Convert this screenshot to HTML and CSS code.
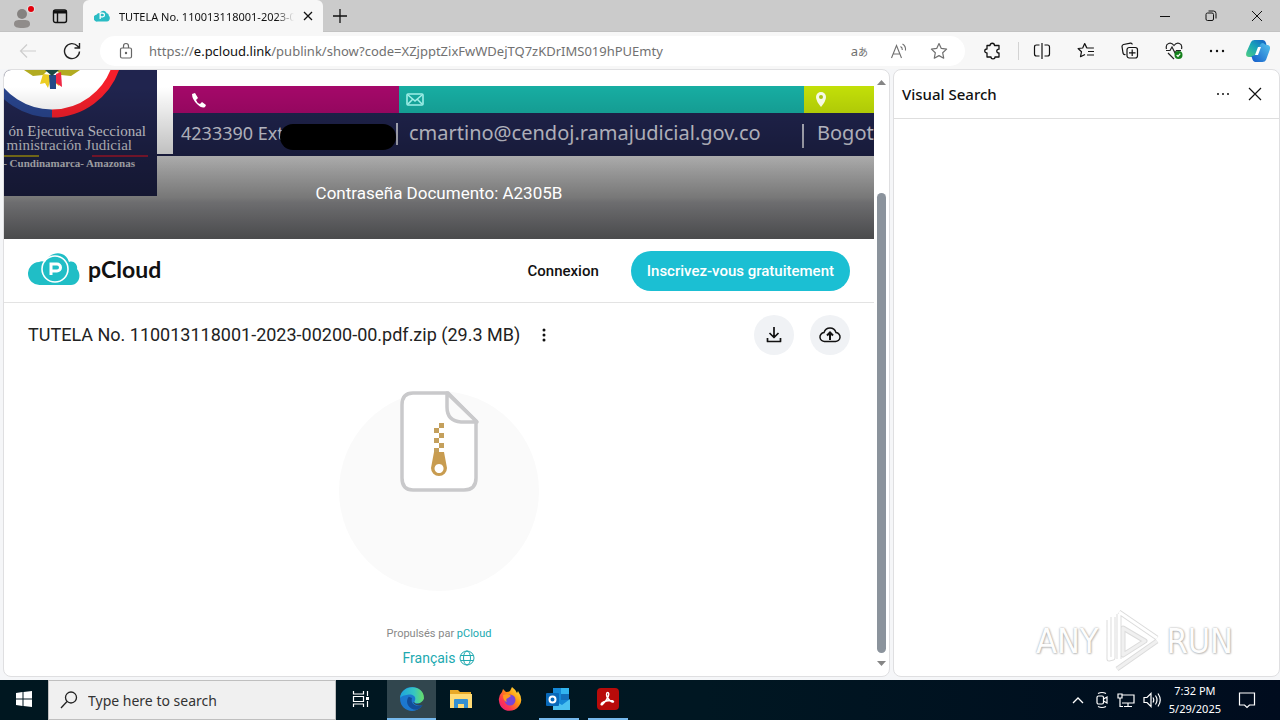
FILE: index.html
```html
<!DOCTYPE html>
<html lang="fr">
<head>
<meta charset="utf-8">
<title>TUTELA No. 110013118001-2023-00200-00.pdf.zip</title>
<link rel="stylesheet" href="styles.css">
</head>
<body>
<header class="tabstrip">
  <div class="strip-tools">
    <button class="icon-btn profile" aria-label="Profile"><svg width="26" height="26" viewBox="0 0 26 26"><circle cx="12" cy="11" r="5" fill="#858280"/><path d="M4 21c0-4 3-4 8-4s8 0 8 4c0 3-3 4-8 4s-8-1-8-4z" fill="#908c8a"/><circle cx="21" cy="6" r="4" fill="#e2dede"/><circle cx="21" cy="6" r="3" fill="#e3000b"/></svg></button>
    <button class="icon-btn" aria-label="Tab actions"><svg width="16" height="16" viewBox="0 0 16 16" fill="none" stroke="#111" stroke-width="1.4"><rect x="1.5" y="2" width="13" height="12.5" rx="2"/><path d="M1.5 4h13" stroke-width="3"/><path d="M5.5 4v10"/></svg></button>
  </div>
  <div class="tab">
    <svg width="16" height="12" viewBox="0 0 52 36"><path d="M12 36A11 11 0 0 1 8 14C11 8 17 9 19 8 27-3 38 0 41 9c5 0 7 4 7 7 7 6 3 20-6 20z" fill="#2abcc4"/><path d="M20 28V9h8a6 6 0 0 1 0 12h-7" fill="none" stroke="#fff" stroke-width="4"/></svg>
    <span class="tab-title">TUTELA No. 110013118001-2023-0</span>
    <button class="icon-btn" aria-label="Close tab"><svg width="10" height="10" viewBox="0 0 10 10" stroke="#111" stroke-width="1.3"><path d="M1 1l8 8M9 1l-8 8"/></svg></button>
  </div>
  <button class="icon-btn new-tab" aria-label="New tab"><svg width="14" height="14" viewBox="0 0 14 14" stroke="#111" stroke-width="1.3"><path d="M7 0v14M0 7h14"/></svg></button>
  <div class="window-controls">
    <button class="icon-btn" aria-label="Minimize"><svg width="12" height="12" viewBox="0 0 12 12" stroke="#111"><path d="M1 6.5h10"/></svg></button>
    <button class="icon-btn" aria-label="Restore"><svg width="12" height="12" viewBox="0 0 12 12" fill="none" stroke="#111"><rect x="1" y="3" width="7.500" height="7.500" rx="1.500"/><path d="M3.500 1h5a2.500 2.500 0 0 1 2.500 2.500v5"/></svg></button>
    <button class="icon-btn" aria-label="Close"><svg width="12" height="12" viewBox="0 0 12 12" stroke="#111"><path d="M1 1l10 10M11 1L1 11"/></svg></button>
  </div>
</header>

<nav class="toolbar">
  <button class="icon-btn" aria-label="Back"><svg width="18" height="16" viewBox="0 0 18 16" fill="none" stroke="#cdcdcd" stroke-width="1.2"><path d="M17 8H1.500M8 1.500L1.500 8 8 14.500"/></svg></button>
  <button class="icon-btn reload" aria-label="Refresh"><svg width="18" height="18" viewBox="0 0 18 18" fill="none" stroke="#222" stroke-width="1.4"><path d="M16.500 9.500A7.500 7.500 0 1 1 14.500 4l2 2M16.500 1v5h-5"/></svg></button>
  <div class="address">
    <svg width="14" height="18" viewBox="0 0 14 18" fill="none" stroke="#666" stroke-width="1.2"><rect x="1.500" y="6" width="11" height="10" rx="1.500"/><path d="M4.500 6V4a2.500 2.500 0 0 1 5 0v2"/><circle cx="7" cy="11" r=".6" fill="#666"/></svg>
    <div class="url" aria-label="Address">https://<b>e.pcloud.link</b>/publink/show?code=XZjpptZixFwWDejTQ7zKDrIMS019hPUEmty</div>
    <button class="icon-btn translate" aria-label="Translate"><span>a<small>あ</small></span></button>
    <button class="icon-btn" aria-label="Read aloud"><svg width="18" height="16" viewBox="0 0 18 16" fill="none" stroke="#707070" stroke-width="1.1"><path d="M1.500 15L6.500 2.500 11.500 15M3 11h7M10.500 3.500q2 1 1.800 3.500M12.500 1q3.500 2 3 6.500"/></svg></button>
    <button class="icon-btn" aria-label="Favorite"><svg width="18" height="18" viewBox="0 0 18 18" fill="none" stroke="#707070" stroke-width="1.2" stroke-linejoin="round"><path d="M9 1.500l2.300 4.900 5.300.7-3.900 3.700 1 5.400L9 13.600l-4.700 2.600 1-5.400L1.400 7.100l5.300-.7z"/></svg></button>
  </div>
  <div class="tools">
    <button class="icon-btn" aria-label="Extensions"><svg width="18" height="18" viewBox="0 0 18 18" fill="none" stroke="#111" stroke-width="1.300" stroke-linejoin="round"><path d="M3 3.500h3c0-3 4.500-3 4.500 0H15v3.700c-3-.3-3 4 0 3.800v4h-4c0 2.500-4 2.500-4 0H3v-4c-3 0-3-4 0-4z"/></svg></button>
    <button class="icon-btn split" aria-label="Split screen"><svg width="18" height="18" viewBox="0 0 18 18" fill="none" stroke="#111" stroke-width="1.200"><path d="M6.500 3h-3Q1.500 3 1.500 5v7q0 2 2 2h3M11.500 3h3q2 0 2 2v7q0 2-2 2h-3M9 1v16"/></svg></button>
    <button class="icon-btn" aria-label="Favorites"><svg width="18" height="18" viewBox="0 0 18 18" fill="none" stroke="#111" stroke-width="1.200" stroke-linejoin="round"><path d="M9.500 5.500L7.700 1.500 5.700 6l-4.600.5 3.400 3.200-1 5L8 12.500M7.700 1.500l2.200 4.500h7M11 9.500h6M10 13h7"/></svg></button>
    <button class="icon-btn" aria-label="Collections"><svg width="18" height="18" viewBox="0 0 18 18" fill="none" stroke="#111" stroke-width="1.200"><path d="M4.500 12.500Q2.500 13 2 11L1 4.500Q1 3 2.500 2.500l7-1.300Q11 1 11.300 2.500"/><rect x="6" y="5.500" width="10.500" height="10.500" rx="2.200"/><path d="M11.200 7.500v6.500M8 10.800h6.500"/></svg></button>
    <button class="icon-btn" aria-label="Browser essentials"><svg width="18" height="18" viewBox="0 0 18 18" fill="none" stroke="#222" stroke-width="1.200"><path d="M1.500 7C0 1 6-.5 9 3.500 12-.5 18 1 16.500 7M1 8.500h4L7 5l3 6 1.500-2.500H16M3 11l6 6"/><circle cx="13.500" cy="13" r="4" fill="#14801b" stroke="none"/><path d="M11.700 13l1.300 1.300 2.300-2.600" stroke="#fff"/></svg></button>
    <button class="icon-btn" aria-label="Settings"><svg width="16" height="4" viewBox="0 0 16 4" fill="#111"><circle cx="2" cy="2" r="1.200"/><circle cx="8" cy="2" r="1.200"/><circle cx="14" cy="2" r="1.200"/></svg></button>
    <button class="icon-btn copilot" aria-label="Copilot"><svg width="24" height="24" viewBox="0 0 24 24"><defs><linearGradient id="cl" x1="0" y1="1" x2="1" y2="0"><stop stop-color="#4fcf82"/><stop offset=".5" stop-color="#19a4b8"/><stop offset="1" stop-color="#165bcb"/></linearGradient><linearGradient id="cr" x1="1" y1="0" x2="0" y2="1"><stop stop-color="#55c5ed"/><stop offset="1" stop-color="#135ac9"/></linearGradient></defs><path d="M5 3q1-2 3.500-2h8Q19 1 20 4l1 4-5-1q-2 0-3 3l-2 6q-1 2-4 2H3q-4 0-2.500-5z" fill="url(#cl)"/><path d="M20 21q-1 2-3.500 2h-7Q7 23 6 19l-.5-2q3 0 4.500-2l4-9q1-2 3-2l3 2h2q3 1 1.700 5z" fill="url(#cr)"/><path d="M12 8h3l-3 8H9z" fill="#fff"/></svg></button>
  </div>
</nav>

<main class="workspace">
  <section class="viewport">
    <div class="page">
      <div class="banner">
        <svg class="banner-art" viewBox="0 0 870 169" preserveAspectRatio="xMinYMin slice" aria-hidden="true">
          <defs>
            <linearGradient id="shade" x1="0" y1="0" x2="0" y2="1"><stop offset=".1" stop-color="#000" stop-opacity="0"/><stop offset=".5" stop-color="#000" stop-opacity=".25"/><stop offset="1" stop-color="#000" stop-opacity=".48"/></linearGradient>
            <linearGradient id="paper" x1="0" y1="0" x2="0" y2="1"><stop stop-color="#e6e6e6"/><stop offset=".5" stop-color="#bdbdbd"/><stop offset=".56" stop-color="#b0b0b4"/><stop offset="1" stop-color="#8f9093"/></linearGradient>
          </defs>
          <path fill="#fff" d="M0 0h870v86H0z"/><path fill="url(#paper)" d="M0 86h870v83H0z"/>
          <path fill="#20244e" d="M0 0h153v126H0z"/><path fill="#20244e" d="M153 84h16v2h-16zM169 43h701v43H169z"/>
          <path fill="#a40869" d="M169 16h226v27H169z"/><path fill="#17ada2" d="M395 16h405v27H395z"/><path fill="#c2df08" d="M800 16h70v27h-70z"/>
          <circle cx="48" cy="-24" r="67" fill="#fff"/><path d="M48 43.500a67.500 67.500 0 0 1-62-40" fill="none" stroke="#29458e" stroke-width="8"/><path d="M48 43.500a67.500 67.500 0 0 0 64-47" fill="none" stroke="#f51f2b" stroke-width="8"/>
          <path d="M20 0l9 6 10-1 5-5M76 0l-9 6-10-1-5-5" fill="#b2ab21"/><path d="M39 4l-3 10 5-1 3 5 4-13M57 3l-2 13-4-3" fill="#eccd22"/><path d="M45 5h7v14h-6z" fill="#244986"/><path d="M52 4l5-2 1 15-6-4" fill="#ef2945"/><path d="M41 0h14l-7 6z" fill="#1b4942"/>
          <g class="art-serif"><text x="142" y="66" text-anchor="end" font-size="15">ón Ejecutiva Seccional</text><text x="128" y="80" text-anchor="end" font-size="15">ministración Judicial</text><text x="131" y="97" text-anchor="end" font-size="11" font-weight="bold">- Cundinamarca- Amazonas</text></g>
          <path d="M0 86h35" stroke="#bda810" stroke-width="1.500"/><path d="M88 86h56" stroke="#bc1830" stroke-width="1.500"/>
          <g class="art-sans"><text x="177" y="70" font-size="18">4233390 Ext</text><text x="405" y="70" font-size="20">cmartino@cendoj.ramajudicial.gov.co</text><text x="813" y="70" font-size="20">Bogot</text></g>
          <path d="M393 53v22M799 54v24" stroke="#b8b9c7" stroke-width="2"/><rect x="276" y="54" width="116" height="26" rx="13" fill="#000"/>
          <path fill="url(#shade)" d="M0 0h870v169H0z"/>
          <path d="M188 24l3-1 3 5-2 2q1 3 4 4l2-2 4 3-1 2q-3 2-8-3t-5-10z" fill="#fff"/>
          <g fill="none" stroke="#9feee7" stroke-width="1.600"><rect x="403" y="24" width="16" height="11" rx="1"/><path d="M404 25l7 6 7-6M404 34l5-5M418 34l-5-5"/></g>
          <path d="M817 37q-5-6-5-10a5 5 0 0 1 10 0q0 4-5 10z" fill="#f6f9e5"/><circle cx="817" cy="27" r="2" fill="#a9c414"/>
        </svg>
        <p class="caption">Contraseña Documento: A2305B</p>
      </div>
      <div class="site-head">
        <a class="brand" href="#"><svg width="52" height="34" viewBox="0 0 52 34"><path d="M12 33A10.500 10.500 0 0 1 11 10c2-1 4-1 6 0C21 0 37-3 41 10c5-2 9 3 8 7 5 6 2 16-6 16z" fill="#20bec6"/><circle cx="27" cy="17" r="13" fill="none" stroke="#fff" stroke-width="1.600"/><path d="M23 23v-11h6a3.200 3.200 0 0 1 0 7h-5" fill="none" stroke="#fff" stroke-width="3"/></svg><span>pCloud</span></a>
        <a class="login" href="#">Connexion</a>
        <button class="signup">Inscrivez-vous gratuitement</button>
      </div>
      <div class="file-bar">
        <h1>TUTELA No. 110013118001-2023-00200-00.pdf.zip (29.3 MB)</h1>
        <button class="icon-btn" aria-label="More"><svg width="6" height="14" viewBox="0 0 6 14" fill="#111"><circle cx="3" cy="2" r="1.500"/><circle cx="3" cy="7" r="1.500"/><circle cx="3" cy="12" r="1.500"/></svg></button>
        <button class="round first" aria-label="Download"><svg width="16" height="18" viewBox="0 0 16 18" fill="none" stroke="#111" stroke-width="1.700"><path d="M8 1v10M3.500 7L8 11.500 12.500 7M1.500 12v3.500h13V12" stroke-linejoin="round"/></svg></button>
        <button class="round" aria-label="Save to pCloud"><svg width="22" height="16" viewBox="0 0 22 16" fill="none" stroke="#111" stroke-width="1.500"><path d="M6 14.500a4.500 4.500 0 0 1-1-9C7-.5 15-.5 17 5.500a4.500 4.500 0 0 1-1 9z"/><path d="M11 13V6M8 8.500L11 5.500l3 3" stroke-width="2"/></svg></button>
      </div>
      <div class="preview"><svg width="80" height="101" viewBox="0 0 80 101"><path d="M14 2h35l28 28v57q0 12-12 12H14Q3 99 3 87V14Q3 2 14 2z" fill="#fff" stroke="#c9c9cb" stroke-width="3.500"/><path d="M48 2v14q0 14 14 15h16z" fill="#fafafa" stroke="#c9c9cb" stroke-width="3.500" stroke-linejoin="round"/><path d="M40 32h5v5h-5zM35 37h5v5h-5zM40 42h5v5h-5zM35 47h5v5h-5zM40 52h5v5h-5zM35 57h5v5h-5z" fill="#c4a05c"/><path fill-rule="evenodd" d="M35 61h10l3 16a8 8 0 1 1-16 0zM40 73a4.500 4.500 0 1 0 .1 0z" fill="#c89c50"/></svg></div>
      <footer class="site-foot"><p>Propulsés par <a href="#">pCloud</a></p><button class="lang">Français <svg width="16" height="16" viewBox="0 0 16 16" fill="none" stroke="#20a9b0"><circle cx="8" cy="8" r="7"/><ellipse cx="8" cy="8" rx="3.500" ry="7"/><path d="M1.500 5.500h13M1.500 10.500h13"/></svg></button></footer>
    </div>
    <div class="scrollbar" aria-hidden="true"><svg width="9" height="5" viewBox="0 0 9 5"><path d="M0 5l4.500-5L9 5z" fill="#858585"/></svg><div class="track"><div class="thumb"></div></div><svg width="9" height="5" viewBox="0 0 9 5"><path d="M0 0l4.500 5L9 0z" fill="#858585"/></svg></div>
  </section>
  <aside class="side">
    <div class="side-head"><h2>Visual Search</h2><button class="icon-btn" aria-label="More options"><svg width="14" height="4" viewBox="0 0 14 4" fill="#222"><circle cx="2" cy="2" r="1.100"/><circle cx="7" cy="2" r="1.100"/><circle cx="12" cy="2" r="1.100"/></svg></button><button class="icon-btn" aria-label="Close panel"><svg width="14" height="14" viewBox="0 0 14 14" stroke="#111" stroke-width="1.200"><path d="M1 1l12 12M13 1L1 13"/></svg></button></div>
    <div class="watermark"><span>ANY</span><svg width="62" height="66" viewBox="0 0 62 66" fill="none" stroke-linejoin="round"><g stroke="#dcdcdc" stroke-width="5"><path d="M18 4l38 26M16 61l40-28M8 12v39l4-1V9M18 6v45M22 20l22 13-22 14z"/></g><g stroke="#fff" stroke-width="3"><path d="M18 4l38 26M8 12v39l4-1V9M18 6v45"/></g><path d="M16 61l40-28M22 20l22 13-22 14z" stroke="#f0f0f0" stroke-width="3"/></svg><span>RUN</span></div>
  </aside>
</main>

<footer class="taskbar">
  <button class="task start" aria-label="Start"><svg width="16" height="16" viewBox="0 0 16 16" fill="#fff"><path d="M0 2l6.500-1v6.500H0zM7.500.9L16 0v7.500H7.500zM0 8.500h6.500V15L0 14zM7.500 8.500H16V16l-8.500-1z"/></svg></button>
  <label class="search"><svg width="18" height="18" viewBox="0 0 18 18" fill="none" stroke="#222" stroke-width="1.300"><circle cx="11" cy="6.500" r="5.500"/><path d="M7 10.500L1 17"/></svg><input type="text" placeholder="Type here to search" aria-label="Type here to search"></label>
  <button class="task view" aria-label="Task view"><svg width="18" height="18" viewBox="0 0 18 18" fill="none" stroke="#fff" stroke-width="1.200"><path d="M1.500 1v3h10V1M1.500 17v-3h10v3M1.500 6.500h10v5h-10zM15.500 1v5M15.500 11v6"/><path d="M14 7h3v3h-3z" fill="#fff" stroke="none"/></svg></button>
  <button class="task active" aria-label="Microsoft Edge"><svg width="26" height="26" viewBox="0 0 24 24"><defs><linearGradient id="eg"><stop stop-color="#1da4df"/><stop offset=".6" stop-color="#37c6c0"/><stop offset="1" stop-color="#69dd63"/></linearGradient></defs><circle cx="12" cy="12" r="11" fill="#1c78cf"/><path d="M1 11C2-2 23-2 23 11c0 5-7 6-9 4 3-5-1-8-6-7-3 .5-6 1-7 3z" fill="url(#eg)"/><path d="M9 10c-4 5 0 12 7 12 3-1 5-3 6-5-5 3-12 0-10-6z" fill="#124d98"/><path d="M14 15c2 3 7 1 9-3v5c-4 2-8 1-10-2z" fill="#34474b"/></svg></button>
  <button class="task" aria-label="File Explorer"><svg width="22" height="20" viewBox="0 0 22 20"><path d="M0 1h8l2 2h11v16H0z" fill="#e8a928"/><path d="M0 5h22v14H0z" fill="#ffdb75"/><path d="M4 19v-8q0-1 1-1h12q1 0 1 1v8h-4v-4H8v4z" fill="#3590d2"/></svg></button>
  <button class="task" aria-label="Firefox"><svg width="24" height="24" viewBox="0 0 24 24"><defs><linearGradient id="ff" x1="1" y1="0" x2="0" y2="1"><stop stop-color="#fff34f"/><stop offset=".4" stop-color="#ff980e"/><stop offset=".7" stop-color="#ff3750"/><stop offset="1" stop-color="#e31587"/></linearGradient></defs><path d="M4 5l1-3 3 3q3 0 4-1l2-4q4 3 5 6l1-2q6 9 1 15C15 27 2 25 1 14Q0 9 4 5z" fill="url(#ff)"/><circle cx="12" cy="13" r="5.500" fill="#7945d6"/><path d="M5 8q5-2 8 1l-3 2q-3 1-1 4-4-1-4-7z" fill="#ff9a1e"/></svg></button>
  <button class="task running" aria-label="Outlook"><svg width="25" height="22" viewBox="0 0 25 22"><path d="M7 0h16v17H7z" fill="#1489d8"/><path d="M15 0h8v6h-8z" fill="#32b5ef"/><path d="M15 6h8v6h-8z" fill="#1371bc"/><path d="M7 12l9 5 8-6v11H7z" fill="#4bc2f1"/><rect y="5" width="13" height="13" rx="1" fill="#0869b9"/><circle cx="6.500" cy="11.500" r="3" fill="none" stroke="#fff" stroke-width="2"/></svg></button>
  <button class="task running" aria-label="Adobe Acrobat"><svg width="22" height="22" viewBox="0 0 22 22"><rect width="22" height="22" rx="4" fill="#b80b0a"/><path d="M10.500 4.500c3 0 .5 7-5 12-2 1-2-1 1-2.500 4-2 9-2 10-.5 0 2-7-2-7-7 0-1 .3-2 1-2z" fill="none" stroke="#fff" stroke-width="1.400"/></svg></button>
  <div class="tray">
    <svg class="chevron" width="12" height="8" viewBox="0 0 12 8" fill="none" stroke="#fff" stroke-width="1.300"><path d="M1 7l5-5 5 5"/></svg>
    <svg width="14" height="18" viewBox="0 0 14 18" fill="none" stroke="#fff" stroke-width="1.200"><rect x="2" y="5" width="6.500" height="8" rx="1.500"/><path d="M8.500 8L12 6v6l-3.500-2M3 2.500q4-2 8 0M3 15.500q4 2 8 0"/></svg>
    <svg width="18" height="16" viewBox="0 0 18 16" fill="none" stroke="#fff" stroke-width="1.200"><path d="M5 3h12v8H5M11 11v3M7 14.500h8M1 2h4v4H1zM3 6v8.500h3"/></svg>
    <svg width="18" height="16" viewBox="0 0 18 16" fill="none" stroke="#fff" stroke-width="1.200"><path d="M1 5.500h3l4-4v13l-4-4H1zM10 5.500q1.500 2.500 0 5M12.500 3.500q3 4.500 0 9M15 1.500q4.500 6.500 0 13"/></svg>
    <div class="clock"><time>7:32 PM</time><time>5/29/2025</time></div>
    <button class="icon-btn" aria-label="Notifications"><svg width="18" height="18" viewBox="0 0 18 18" fill="none" stroke="#fff" stroke-width="1.200"><path d="M1.500 2h15v12h-5L9 16.500 6.500 14h-5z"/></svg></button>
  </div>
</footer>
</body>
</html>
```

FILE: styles.css
```css
* { box-sizing: border-box; }
body { margin: 0; min-height: 100vh; display: flex; flex-direction: column; background: #f5f6f8; color: #111; font-family: "Noto Sans", "Open Sans", "Noto Sans CJK JP", sans-serif; font-size: 12px; overflow: hidden; }
button, input { font: inherit; color: inherit; border: 0; padding: 0; background: none; }
a { text-decoration: none; color: inherit; }
p, h1, h2 { margin: 0; font-weight: 400; }
svg { display: block; flex: none; }
.icon-btn { display: grid; place-items: center; flex: none; }

.tabstrip { display: flex; height: 32px; flex: none; background: #cbcbcb; border-bottom: 1px solid #c2c2c2; }
.strip-tools { display: flex; align-items: center; gap: 16px; width: 83px; padding-left: 10px; }
.tab { display: flex; align-items: center; width: 240px; height: 32px; padding: 0 10px 0 11px; gap: 9px; background: #f7f7f7; border-radius: 6px 6px 0 0; }
.tab-title { flex: 1; min-width: 0; overflow: hidden; white-space: nowrap; font-size: 11px; mask-image: linear-gradient(90deg, #000 90%, transparent); }
.new-tab { width: 34px; }
.window-controls { display: flex; margin-left: auto; }
.window-controls .icon-btn { width: 46px; }

.toolbar { display: flex; align-items: center; height: 37px; flex: none; padding: 0 10px 0 19px; background: #f7f7f7; }
.reload { margin-left: 26px; }
.address { flex: 1; min-width: 0; display: flex; align-items: center; height: 30px; margin: 0 19px; padding: 0 17px 0 19px; border-radius: 15px; background: #fff; gap: 22px; }
.url { flex: 1; min-width: 0; margin-left: -6px; overflow: hidden; white-space: nowrap; font-size: 13px; color: #717171; }
.url b { font-weight: 400; color: #111; }
.translate { color: #707070; font-size: 13px; }
.translate small { font-size: 10px; }
.tools { display: flex; align-items: center; gap: 26px; }
.split { border-left: 1px solid #d3d3d3; padding-left: 14px; margin-left: -10px; }
.copilot { margin-left: -5px; }

.workspace { flex: 1; min-height: 0; display: grid; grid-template-columns: minmax(0, 1fr) 387px; gap: 3px; padding: 0 0 3px 3px; }
.viewport, .side { background: #fff; border: 1px solid #dfdfe1; border-radius: 8px; overflow: hidden; }
.viewport { display: flex; }
.page { flex: 1; min-width: 0; font-family: Roboto, sans-serif; }
.banner { display: grid; height: 169px; overflow: hidden; background: #777; }
.banner-art, .caption { grid-area: 1 / 1; }
.banner-art { width: 100%; height: 169px; }
.caption { place-self: start center; padding-top: 111px; color: #fff; font-size: 17px; line-height: 24px; }
.art-serif { font-family: "Liberation Serif", serif; fill: #d4d5dc; }
.art-sans { font-family: "Noto Sans", sans-serif; fill: #d2d3df; }
.site-head { display: flex; align-items: center; height: 64px; padding: 0 24px; border-bottom: 1px solid #e3e3e3; font-size: 15px; font-weight: 500; }
.brand { display: flex; align-items: center; gap: 8px; padding-bottom: 3px; font: 700 23px/30px Lato, sans-serif; }
.login { margin-left: auto; margin-right: 32px; }
.signup { height: 40px; padding: 0 16px; border-radius: 20px; background: #1bbfd3; color: #fff; }
.file-bar { display: flex; align-items: center; padding: 12px 24px; }
h1 { font-size: 18px; line-height: 24px; margin-right: 21px; color: #222; }
.round { display: grid; place-items: center; width: 40px; height: 40px; margin-left: 16px; border-radius: 50%; background: #f0f2f5; }
.round.first { margin-left: auto; }
.preview { display: flex; justify-content: center; width: 200px; height: 200px; margin: 24px auto 0; border-radius: 50%; background: #fafafa; }
.site-foot { display: flex; flex-direction: column; align-items: center; padding-top: 34px; font-size: 11px; line-height: 18px; color: #888; }
.site-foot a, .lang { color: #20a9b0; }
.lang { display: flex; align-items: center; gap: 4px; margin-top: 5px; font-size: 14px; line-height: 20px; }
.scrollbar { display: flex; flex-direction: column; align-items: center; width: 15px; padding: 10px 0; }
.track { flex: 1; display: flex; align-items: flex-end; padding-bottom: 8px; }
.thumb { width: 9px; height: 81%; border-radius: 5px; background: #8b939c; }

.side { position: relative; }
.side-head { display: flex; align-items: center; height: 49px; padding: 0 17px 0 8px; gap: 18px; border-bottom: 1px solid #dedede; }
h2 { flex: 1; font-size: 15px; font-weight: 500; }
.watermark { position: absolute; right: 46px; bottom: 2px; display: flex; align-items: center; gap: 3px; font-family: "Liberation Sans Narrow", "DejaVu Sans Condensed", sans-serif; font-size: 34px; color: #fdfdfd; text-shadow: 0 0 2px #999, 1px 1px 2px #ccc; }

.taskbar { display: flex; height: 40px; flex: none; background: linear-gradient(90deg, #001720, #001722 55%, #000c1e); color: #fff; }
.task { display: grid; place-items: center; width: 49px; border-bottom: 2px solid transparent; }
.start { width: 48px; }
.view { width: 51px; padding-right: 2px; }
.active { background: #31464e; border-color: #76b9ed; }
.running { background: linear-gradient(#76b9ed, #76b9ed) center bottom / 40px 2px no-repeat border-box; }
.search { display: flex; align-items: center; gap: 10px; width: 288px; padding: 0 11px; background: #f0f0f0; border: 1px solid #bfbfbf; color: #333; }
.search input { flex: 1; min-width: 0; font-size: 14px; outline: 0; }
.search input::placeholder { color: #333; opacity: 1; }
.tray { display: flex; align-items: center; gap: 8px; margin-left: auto; padding-right: 24px; }
.chevron { margin-right: 3px; }
.clock { display: flex; flex-direction: column; align-items: center; font-size: 11px; line-height: 18px; margin-right: 9px; }
```
